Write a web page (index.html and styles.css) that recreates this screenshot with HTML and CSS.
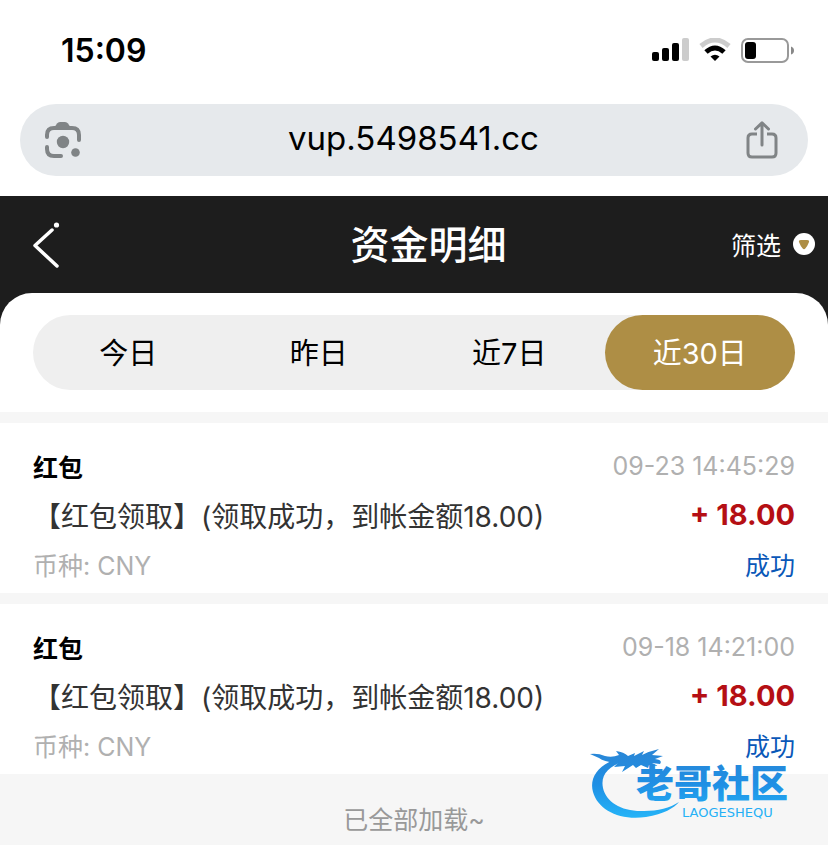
FILE: index.html
```html
<!DOCTYPE html>
<html lang="zh-CN">
<head>
    <meta charset="utf-8">
    <meta name="viewport" content="width=device-width, initial-scale=1.0">
    <title>资金明细</title>
    <link rel="stylesheet" href="styles.css">
</head>
<body>
<div class="page">

    <div class="browser">
        <div class="status-bar">
            <span class="clock">15:09</span>
            <div class="status-icons">
                <svg width="37" height="24" viewBox="0 0 37 24">
                    <rect x="0" y="14" width="7" height="9" rx="2"/>
                    <rect x="10" y="10" width="7" height="13" rx="2"/>
                    <rect x="20" y="5" width="7" height="18" rx="2"/>
                    <rect x="30" y="0" width="7" height="23" rx="2" fill="#ccc"/>
                </svg>
                <svg width="32" height="24" viewBox="0 0 32 24" fill="none">
                    <path d="M2 8 Q16 -4 30 8" stroke="#ccc" stroke-width="5"/>
                    <path d="M7 14 Q16 6 25 14" stroke="#000" stroke-width="5"/>
                    <path d="M16 23 L11.5 18.5 Q16 15 20.500 18.500 Z" fill="#000"/>
                </svg>
                <svg width="53" height="25" viewBox="0 0 53 25">
                    <rect x="1" y="1" width="46" height="23" rx="6" fill="none" stroke="#999" stroke-width="2"/>
                    <rect x="4" y="4" width="11" height="17" rx="3"/>
                    <path d="M50 8.500 Q53 9.500 53 12.500 Q53 15.500 50 16.500 Z" fill="#888"/>
                </svg>
            </div>
        </div>

        <div class="address-bar">
            <button class="icon-btn" aria-label="Lens">
                <svg width="38" height="38" viewBox="0 0 38 38" fill="none" stroke="#808486" stroke-width="4" stroke-linecap="round">
                    <path d="M3 16 V14 Q3 7 10 7 H28 Q35 7 35 14 V19"/>
                    <path d="M3 26 V28 Q3 35 10 35 H17"/>
                    <path d="M10 7 L13 2.500 Q14 1 16 1 H21 Q23 1 24 2.500 L27 7 Z" fill="#808486" stroke="none"/>
                    <circle cx="19" cy="21" r="6.200" fill="#808486" stroke="none"/>
                    <circle cx="31.500" cy="31.500" r="4.300" fill="#808486" stroke="none"/>
                </svg>
            </button>
            <span class="url">vup.5498541.cc</span>
            <button class="icon-btn" aria-label="Share">
                <svg width="34" height="38" viewBox="0 0 34 38" fill="none" stroke="#808486" stroke-width="3" stroke-linecap="round" stroke-linejoin="round">
                    <path d="M12 13 H7 Q3 13 3 17 V32 Q3 36 7 36 H27 Q31 36 31 32 V17 Q31 13 27 13 H22" stroke-linecap="butt"/>
                    <path d="M17 24 V2 M10.500 8 L17 1.800 L23.500 8"/>
                </svg>
            </button>
        </div>
    </div>

    <header class="header">
        <a class="back" href="#" aria-label="返回">
            <svg width="28" height="48" viewBox="0 0 28 48" fill="none" stroke="#fff" stroke-width="3.500" stroke-linecap="round" stroke-linejoin="round">
                <path d="M20 10 L3 25.500 L25 46"/>
                <circle cx="24.500" cy="5" r="2.600" fill="#fff" stroke="none"/>
            </svg>
        </a>
        <h1>资金明细</h1>
        <button class="filter">
            筛选
            <svg width="22" height="22" viewBox="0 0 22 22">
                <circle cx="11" cy="11" r="11" fill="#fff"/>
                <path d="M8 7 H14 Q17 7 15.800 9.500 Q14.500 13 12.500 15.300 Q11 17 9.500 15.300 Q7.500 13 6.200 9.500 Q5 7 8 7 Z" fill="#ae8e45"/>
            </svg>
        </button>
    </header>

    <main>
        <div class="tabs-wrap">
            <div class="tabs">
                <button>今日</button>
                <button>昨日</button>
                <button>近7日</button>
                <button class="active">近30日</button>
            </div>
        </div>

        <div class="record">
            <div class="row">
                <b class="type">红包</b>
                <span class="muted">09-23 14:45:29</span>
            </div>
            <div class="row">
                <span class="desc">【红包领取】(领取成功，到帐金额18.00)</span>
                <b class="amount">+ 18.00</b>
            </div>
            <div class="row">
                <span class="muted">币种: CNY</span>
                <span class="ok">成功</span>
            </div>
        </div>

        <div class="record">
            <div class="row">
                <b class="type">红包</b>
                <span class="muted">09-18 14:21:00</span>
            </div>
            <div class="row">
                <span class="desc">【红包领取】(领取成功，到帐金额18.00)</span>
                <b class="amount">+ 18.00</b>
            </div>
            <div class="row">
                <span class="muted">币种: CNY</span>
                <span class="ok">成功</span>
            </div>
        </div>
    </main>

    <p class="load-end">已全部加载~</p>

    <svg class="watermark" width="226" height="76" viewBox="0 0 226 76">
        <defs>
            <linearGradient id="blue" gradientUnits="userSpaceOnUse" x1="0" y1="4" x2="0" y2="72">
                <stop offset="0" stop-color="#2a86d6"/>
                <stop offset="0.500" stop-color="#1f8fe4"/>
                <stop offset="1" stop-color="#25b4f8"/>
            </linearGradient>
        </defs>
        <g fill="url(#blue)">
            <path d="M32 12 C10 18 1 32 5 46 C10 64 32 75 58 71 C76 68 86 62 91 56 C82 62 70 65 56 65 C34 66 18 56 15 42 C12 28 22 19 38 15 Z"/>
            <path d="M2 8 Q10 7 17 10 Q24 12 31 9 L28 5 Q36 6 40 10 L47 7 L46 10 L56 5 L54 9 Q62 5 71 3 L64 9 L75 10 L67 13 Q75 14 72 18 L64 17 L70 20 L61 19 L60 22 L53 19 L48 22 L45 19 L34 26 L37 20 L26 21 L31 16 Q17 17 11 12 Z"/>
            <text class="mark-name" x="48" y="51">老哥社区</text>
            <text class="mark-sub" x="94" y="71">LAOGESHEQU</text>
        </g>
    </svg>

</div>
</body>
</html>
```

FILE: styles.css
```css
* {
    box-sizing: border-box;
}
body {
    margin: 0;
    background: #f6f6f6;
    color: #000;
    font-family: Inter, "Noto Sans CJK SC", sans-serif;
    font-size: 25px;
}
button {
    padding: 0;
    border: none;
    background: none;
    color: inherit;
    font: inherit;
    cursor: pointer;
}
svg {
    display: block;
}
.page {
    position: relative;
}

/* phone status bar + address bar */
.browser {
    padding: 0 20px 20px;
    background: #fff;
}
.status-bar {
    display: flex;
    align-items: center;
    justify-content: space-between;
    height: 104px;
    padding: 0 14px 4px 41px;
}
.clock {
    font-size: 32px;
    font-weight: 600;
}
.status-icons {
    display: flex;
    align-items: center;
    gap: 10px;
}
.address-bar {
    display: flex;
    align-items: center;
    justify-content: space-between;
    height: 72px;
    padding: 0 29px 0 24px;
    border-radius: 36px;
    background: #e6e9ec;
}
.url {
    padding-bottom: 4px;
    font-size: 33px;
}

.header {
    display: grid;
    grid-template-columns: 1fr auto 1fr;
    align-items: center;
    height: 129px;
    padding: 0 13px 34px 32px;
    background: #1d1d1d;
    color: #fff;
}
.header h1 {
    margin: 0;
    padding: 0 0 4px 10px;
    font-size: 39px;
    font-weight: 500;
}
.filter {
    display: flex;
    align-items: center;
    justify-self: end;
    gap: 12px;
}

main {
    margin-top: -32px;
}
.tabs-wrap {
    padding: 22px 33px;
    border-radius: 32px 32px 0 0;
    background: #fff;
}
.tabs {
    display: flex;
    border-radius: 38px;
    background: #efefef;
}
.tabs button {
    flex: 1;
    height: 75px;
    padding-bottom: 4px;
    border-radius: 38px;
    font-size: 29px;
}
.tabs .active {
    background: #ae8e45;
    color: #fff;
}

.record {
    margin-top: 11px;
    padding: 18px 33px 5px;
    background: #fff;
}
.row {
    display: flex;
    align-items: center;
    justify-content: space-between;
    height: 49px;
}
.desc {
    color: #333;
    font-size: 28px;
}
.amount {
    color: #b50f14;
    font-size: 29px;
}
.muted {
    color: #b0b0b0;
}
.ok {
    color: #0a58b8;
}
.load-end {
    margin: 0;
    padding: 22px 0 0;
    color: #999;
    line-height: 49px;
    text-align: center;
}

.watermark {
    position: absolute;
    right: 14px;
    bottom: 23px;
}
.mark-name {
    font-size: 38px;
    font-weight: 900;
}
.mark-sub {
    font-family: "DejaVu Sans", sans-serif;
    font-size: 13px;
}
```
